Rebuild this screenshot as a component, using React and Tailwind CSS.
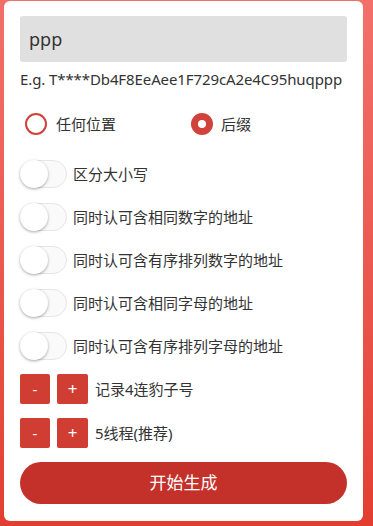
import React from "react";

function Toggle({ label }) {
  return (
    <div className="flex items-center h-[30px]">
      <div className="relative w-[47px] h-[28px] rounded-full border border-[#e6e6e6] bg-[#fafafa]">
        <div className="absolute left-[-1px] top-[-1px] w-[28px] h-[28px] rounded-full bg-white shadow-[0_1px_3px_rgba(0,0,0,0.35)]" />
      </div>
      <span className="ml-[6px] text-[15px] text-[#333]">{label}</span>
    </div>
  );
}

function Stepper({ label }) {
  return (
    <div className="flex items-center h-[30px]">
      <button className="w-[30px] h-[30px] rounded-[2px] bg-[#cf3d33] text-white text-[15px] flex items-center justify-center">-</button>
      <button className="ml-[7px] w-[31px] h-[30px] rounded-[2px] bg-[#cf3d33] text-white text-[17px] flex items-center justify-center">+</button>
      <span className="ml-[7px] text-[15px] text-[#333]">{label}</span>
    </div>
  );
}

export default function App() {
  return (
    <div
      className="w-[373px] h-[526px] pt-[1px] pl-[4px] pr-[10px] bg-gradient-to-b from-[#f2706a] to-[#e33d31]"
      style={{ fontFamily: '"Noto Sans", "Noto Sans CJK SC", sans-serif' }}
    >
      <div className="bg-white rounded-[6px] h-[520px] px-[16px] pt-[15px]">
        <div className="h-[46px] bg-[#e0e0e0] rounded-[3px] flex items-center px-[9px] text-[18px] text-[#333]">ppp</div>
        <div className="mt-[7px] text-[15px] leading-[20px] tracking-[-0.1px] text-[#333]">E.g. T****Db4F8EeAee1F729cA2e4C95huqppp</div>
        <div className="mt-[23px] flex items-center h-[24px]">
          <div className="flex items-center w-[171px] pl-[5px]">
            <div className="w-[22px] h-[22px] rounded-full border-2 border-[#d0423a]" />
            <span className="ml-[9px] text-[15px] text-[#333]">任何位置</span>
          </div>
          <div className="flex items-center">
            <div className="w-[22px] h-[22px] rounded-full bg-[#d0423a] flex items-center justify-center">
              <div className="w-[8px] h-[8px] rounded-full bg-white" />
            </div>
            <span className="ml-[8px] text-[15px] text-[#333]">后缀</span>
          </div>
        </div>
        <div className="mt-[23px] flex flex-col gap-[13px]">
          <Toggle label="区分大小写" />
          <Toggle label="同时认可含相同数字的地址" />
          <Toggle label="同时认可含有序排列数字的地址" />
          <Toggle label="同时认可含相同字母的地址" />
          <Toggle label="同时认可含有序排列字母的地址" />
        </div>
        <div className="mt-[13px] flex flex-col gap-[14px]">
          <Stepper label="记录4连豹子号" />
          <Stepper label="5线程(推荐)" />
        </div>
        <button className="mt-[14px] w-full h-[42px] rounded-full bg-[#c4312a] text-white text-[17px]">开始生成</button>
      </div>
    </div>
  );
}
